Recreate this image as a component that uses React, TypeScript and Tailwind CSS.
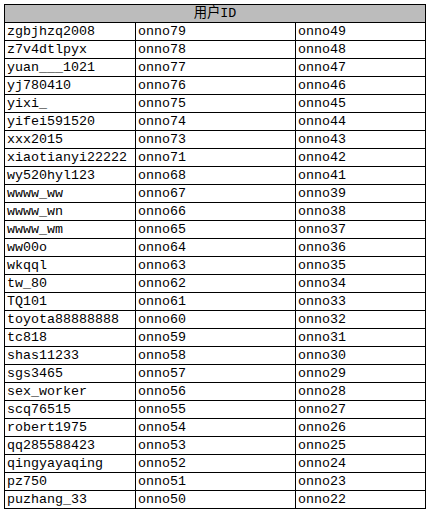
const rows: [string, string, string][] = [
  ["zgbjhzq2008", "onno79", "onno49"],
  ["z7v4dtlpyx", "onno78", "onno48"],
  ["yuan___1021", "onno77", "onno47"],
  ["yj780410", "onno76", "onno46"],
  ["yixi_", "onno75", "onno45"],
  ["yifei591520", "onno74", "onno44"],
  ["xxx2015", "onno73", "onno43"],
  ["xiaotianyi22222", "onno71", "onno42"],
  ["wy520hyl123", "onno68", "onno41"],
  ["wwww_ww", "onno67", "onno39"],
  ["wwww_wn", "onno66", "onno38"],
  ["wwww_wm", "onno65", "onno37"],
  ["ww00o", "onno64", "onno36"],
  ["wkqql", "onno63", "onno35"],
  ["tw_80", "onno62", "onno34"],
  ["TQ101", "onno61", "onno33"],
  ["toyota88888888", "onno60", "onno32"],
  ["tc818", "onno59", "onno31"],
  ["shas11233", "onno58", "onno30"],
  ["sgs3465", "onno57", "onno29"],
  ["sex_worker", "onno56", "onno28"],
  ["scq76515", "onno55", "onno27"],
  ["robert1975", "onno54", "onno26"],
  ["qq285588423", "onno53", "onno25"],
  ["qingyayaqing", "onno52", "onno24"],
  ["pz750", "onno51", "onno23"],
  ["puzhang_33", "onno50", "onno22"],
];

export default function App() {
  return (
    <div className="w-[428px] h-[512px] bg-white overflow-hidden pt-[4px] pl-[4px]">
      <div
        className="w-[422px] border-l border-t border-black text-black text-[13.33px] leading-[17px]"
        style={{ fontFamily: '"Liberation Mono", "Noto Sans CJK SC", monospace' }}
      >
        <div className="h-[18px] bg-[#bcbcbc] border-r border-b border-black flex items-center justify-center">
          用户ID
        </div>
        {rows.map((r, i) => (
          <div key={i} className="grid grid-cols-[131px_160px_130px]">
            {r.map((c, j) => (
              <div
                key={j}
                className="h-[18px] border-r border-b border-black pl-[2px] whitespace-nowrap overflow-hidden"
              >
                {c}
              </div>
            ))}
          </div>
        ))}
      </div>
    </div>
  );
}
